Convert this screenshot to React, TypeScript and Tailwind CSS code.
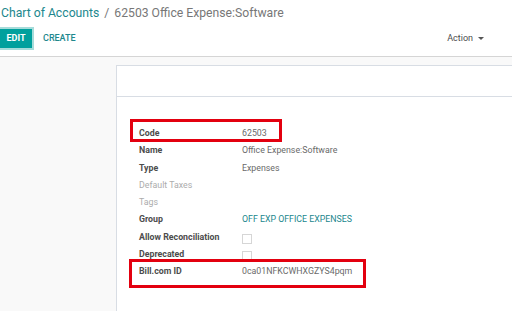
import React from "react";

const rows: { label: string; value?: string; kind?: "muted" | "link" | "check" }[] = [
  { label: "Code", value: "62503" },
  { label: "Name", value: "Office Expense:Software" },
  { label: "Type", value: "Expenses" },
  { label: "Default Taxes", kind: "muted" },
  { label: "Tags", kind: "muted" },
  { label: "Group", value: "OFF EXP OFFICE EXPENSES", kind: "link" },
  { label: "Allow Reconciliation", kind: "check" },
  { label: "Deprecated", kind: "check" },
  { label: "Bill.com ID", value: "0ca01NFKCWHXGZYS4pqm" },
];

function FieldRow({ row }: { row: (typeof rows)[number] }) {
  const muted = row.kind === "muted";
  return (
    <div className="flex h-[17.25px] items-center">
      <div
        className={`w-[103px] shrink-0 text-[8.8px] ${
          muted ? "text-[#acacac]" : "font-bold text-[#4c4c4c]"
        }`}
      >
        {row.label}
      </div>
      {row.kind === "check" ? (
        <span className="mt-[4px] block h-[10px] w-[10px] border border-[#d6d6d6] bg-white" />
      ) : (
        <div
          className={`text-[8.8px] ${
            row.kind === "link" ? "text-[#21878d]" : "text-[#6a6a6a]"
          }`}
        >
          {row.value}
        </div>
      )}
    </div>
  );
}

export default function App() {
  return (
    <div
      className="relative h-[311px] w-[512px] overflow-hidden bg-[#f9f9f9]"
      style={{ fontFamily: "Roboto, 'Liberation Sans', sans-serif" }}
    >
      <div className="h-[57px] border-b border-[#d5d5d5] bg-white">
        <div className="flex h-[27px] items-center pl-[1px] text-[12.2px] leading-none">
          <span className="text-[#21878d]">Chart of Accounts</span>
          <span className="mx-[5px] text-[#777777]">/</span>
          <span className="text-[#777777]">62503 Office Expense:Software</span>
        </div>
        <div className="flex items-center">
          <button className="h-[23px] w-[34px] border-y-2 border-r-2 border-[#a6dcda] bg-[#00a09d] text-[9px] font-bold text-white">
            EDIT
          </button>
          <button className="ml-[9px] text-[9px] font-medium text-[#21878d]">
            CREATE
          </button>
          <div className="ml-auto mr-[28px] flex items-center gap-[5px] text-[9px] text-[#4c4c4c]">
            Action
            <span className="h-0 w-0 border-x-[3px] border-t-[3px] border-x-transparent border-t-[#555]" />
          </div>
        </div>
      </div>

      <div className="ml-[116px] mt-[8px] h-[300px] border-l border-t border-[#d8dde4] bg-white">
        <div className="h-[31px] border-b border-[#d8dde4]" />
        <div className="pl-[22px] pt-[28px]">
          {rows.map((r) => (
            <FieldRow key={r.label} row={r} />
          ))}
        </div>
      </div>

      {/* red annotation boxes */}
      <div className="absolute left-[130px] top-[119px] h-[23px] w-[152px] border-[3px] border-[#e3000f]" />
      <div className="absolute left-[129px] top-[259px] h-[29px] w-[237px] border-[3px] border-[#e3000f]" />
    </div>
  );
}
